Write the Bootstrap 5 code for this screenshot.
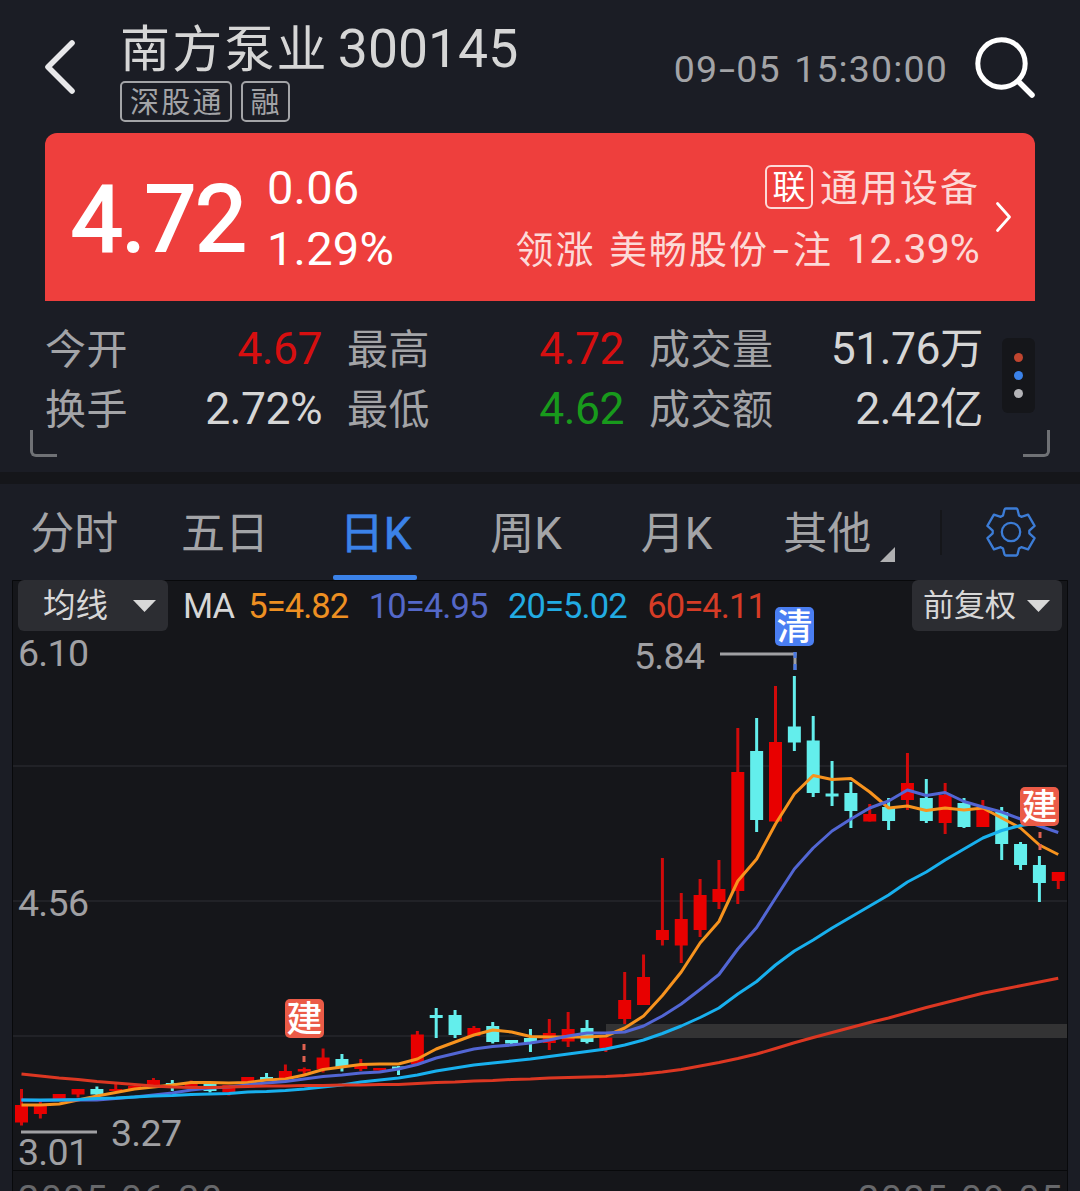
<!DOCTYPE html>
<html lang="zh-CN">
<head>
<meta charset="utf-8">
<meta name="viewport" content="width=device-width, initial-scale=1">
<title>南方泵业 300145</title>
<link rel="stylesheet" href="https://cdn.jsdelivr.net/npm/bootstrap@5.3.0/dist/css/bootstrap.min.css">
<style>
:root{--page:#1b1d25;--deep:#15161a;--muted:#a3a4a7;--bright:#d6d6d6;--accent:#3b82e9}
html,body{height:1191px;overflow:hidden}
body{background:var(--page);color:var(--bright);font-family:Roboto,"Noto Sans CJK SC",sans-serif;width:1080px;line-height:1;white-space:nowrap}
.topbar{height:133px;padding:0 45px}
.back{width:75px;padding-top:39px}
.stock{height:50px;margin-top:24px}
.stock-name{font-size:50px;letter-spacing:2.2px;line-height:50px;padding-top:2px}
.stock-code{font-size:53.5px;letter-spacing:0;line-height:50px;margin-left:9px}
.tags{gap:9px;margin-top:7px}
.tag{height:41px;border:2px solid var(--muted);border-radius:5px;color:var(--muted);font-size:29px;line-height:41px;letter-spacing:2.2px;padding:0 6px 0 8px}
.clock{font-size:37.5px;letter-spacing:1.15px;word-spacing:3px;color:var(--muted);padding-top:51px;margin-right:25px}
.dash{display:inline-block;text-align:center;letter-spacing:0;transform:scaleX(1.55)}
.clock .dash{width:18px}
.sector .dash{width:24px}
.find{padding-top:35px}
.quote{height:168px;margin:0 45px;background:#ee3f3d;border-radius:12px 12px 0 0;color:#fff}
.price{font-size:92px;-webkit-text-stroke:2px #fff;letter-spacing:-1.2px;width:222px;padding-left:26px;line-height:168px;padding-top:3px}
.delta{font-size:47px;line-height:60.5px;padding-top:25px;letter-spacing:.2px}
.sector{color:#fcdad8;font-size:38px;letter-spacing:2px;line-height:60px;padding-top:25px;margin-right:14px}
.sector-row{height:60.5px}
.lead-row{word-spacing:2px}
.link-tag{width:48px;height:44px;border:2px solid #fcdad8;border-radius:6px;font-size:33px;line-height:41px;color:#fff;letter-spacing:0;margin-right:7px;margin-top:-2px;text-align:center}
.pct{font-size:41px;letter-spacing:.1px}
.quote-arrow{padding-top:68px;margin-right:22px}
.stats{height:171px;padding:18px 45px 0}
.stat-col{line-height:60px}
.stat-col .d-flex{height:60px}
.stat-col .label{font-size:41px;letter-spacing:.5px;color:var(--muted);padding-top:1px}
.stat-col .val{font-size:44.5px;letter-spacing:-.5px}
.narrow{width:277px;margin-right:25px}
.wide{width:334px}
.unit{font-size:43.5px}
.up{color:#d60f10}.down{color:#189a1c}
.more{width:33px;height:75px;background:var(--deep);border-radius:6px;margin:19px 0 0 19px;gap:9px}
.dot{width:9px;height:9px;border-radius:50%}
.corner{bottom:15px;width:27px;height:27px;border:solid #6f7175;border-width:0 0 3px 3px;border-radius:0 0 0 6px}
.corner-l{left:30px}
.corner-r{right:30px;transform:scaleX(-1)}
.band{height:12px;background:var(--deep)}
.tabs{height:96px}
.tab-item{width:150.6px;height:96px;font-size:44px;line-height:100px;color:var(--muted)}
.tab-item:first-child{margin-left:-1px}
.tab-item.on{color:var(--accent);-webkit-text-stroke:.6px var(--accent)}
.tab-item.on::after{content:"";position:absolute;left:33px;right:33.6px;bottom:0;height:5px;border-radius:2px;background:var(--accent)}
.tab-mark{right:8px;top:63px}
.tab-sep{width:2px;height:45px;background:var(--deep);margin-left:37px}
.gear{margin-left:43px}
.chart-box{height:611px;margin:0 12px;background:var(--deep)}
.tools{left:6px;right:6px;top:0;height:51px}
.pick{width:150px;height:51px;background:#2c2d32;border-radius:6px;font-size:32.5px;line-height:52px;color:#d8d8d8}
.pick-ma{padding:0 12px 0 25px}
.pick-adj{padding:0 12px 0 11px;font-size:31px}
.ma{font-size:34.5px;line-height:52px;letter-spacing:-.9px;margin-left:20.5px}
svg{display:block}
svg text{font-family:Roboto,"Noto Sans CJK SC",sans-serif}
</style>
</head>
<body>
<header class="topbar d-flex align-items-start">
  <div class="back"><svg width="34" height="56" viewBox="0 0 34 56"><path d="M27 4 3 28 27 52" fill="none" stroke="#e8e8ea" stroke-width="5.6" stroke-linecap="round" stroke-linejoin="round"/></svg></div>
  <div class="flex-grow-1">
    <div class="stock d-flex align-items-center"><span class="stock-name">南方泵业</span><span class="stock-code">300145</span></div>
    <div class="tags d-flex"><span class="tag">深股通</span><span class="tag">融</span></div>
  </div>
  <div class="clock">09<span class="dash">-</span>05 15:30:00</div>
  <div class="find"><svg width="62" height="64" viewBox="0 0 62 64"><g fill="none" stroke="#fff"><circle cx="28.5" cy="28.5" r="23.7" stroke-width="5"/><path d="M46 47 59 60" stroke-width="5.500" stroke-linecap="round"/></g></svg></div>
</header>

<section class="quote d-flex">
  <div class="price">4.72</div>
  <div class="delta"><div>0.06</div><div>1.29%</div></div>
  <div class="sector ms-auto">
    <div class="sector-row d-flex justify-content-end align-items-center"><span class="link-tag">联</span><span>通用设备</span></div>
    <div class="sector-row lead-row text-end">领涨 美畅股份<span class="dash">-</span>注 <span class="pct">12.39%</span></div>
  </div>
  <div class="quote-arrow"><svg width="19" height="32" viewBox="0 0 19 32"><path d="M3.500 2.500 15.500 16 3.500 29.500" fill="none" stroke="#fff" stroke-width="2.800" stroke-linecap="round" stroke-linejoin="round"/></svg></div>
</section>

<section class="stats d-flex position-relative">
  <div class="stat-col narrow">
    <div class="d-flex justify-content-between"><span class="label">今开</span><span class="val up">4.67</span></div>
    <div class="d-flex justify-content-between"><span class="label">换手</span><span class="val">2.72%</span></div>
  </div>
  <div class="stat-col narrow">
    <div class="d-flex justify-content-between"><span class="label">最高</span><span class="val up">4.72</span></div>
    <div class="d-flex justify-content-between"><span class="label">最低</span><span class="val down">4.62</span></div>
  </div>
  <div class="stat-col wide">
    <div class="d-flex justify-content-between"><span class="label">成交量</span><span class="val">51.76<span class="unit">万</span></span></div>
    <div class="d-flex justify-content-between"><span class="label">成交额</span><span class="val">2.42<span class="unit">亿</span></span></div>
  </div>
  <div class="more d-flex flex-column align-items-center justify-content-center"><i class="dot" style="background:#c0452f"></i><i class="dot" style="background:#3b82e9"></i><i class="dot" style="background:#b4b4b8"></i></div>
  <span class="corner corner-l position-absolute"></span>
  <span class="corner corner-r position-absolute"></span>
</section>
<div class="band"></div>

<nav class="tabs d-flex align-items-center">
  <div class="tab-item text-center">分时</div>
  <div class="tab-item text-center">五日</div>
  <div class="tab-item text-center position-relative on">日K</div>
  <div class="tab-item text-center">周K</div>
  <div class="tab-item text-center">月K</div>
  <div class="tab-item text-center position-relative">其他<svg class="tab-mark position-absolute" width="15" height="15"><path d="M15 0V15H0Z" fill="#b0b0b2"/></svg></div>
  <div class="tab-sep"></div>
  <svg class="gear" width="52" height="52" viewBox="-26 -26 52 52"><g fill="none" stroke="#3c7cd6" stroke-width="2.300" stroke-linejoin="round"><path d="M-8-16.500-6.500-22.500Q-6.200-23.500-5.200-23.500H5.200Q6.200-23.500 6.500-22.500L8-16.500 10.300-15.200 17.100-17.400 23.600-6.100 18.300-1.300V1.300L23.600 6.100 17.100 17.400 10.300 15.200 8 16.500 6.500 22.500Q6.200 23.500 5.200 23.500H-5.200Q-6.200 23.500-6.500 22.500L-8 16.500-10.300 15.200-17.100 17.400-23.600 6.100-18.300 1.300V-1.300L-23.600-6.100-17.100-17.400-10.300-15.200Z"/><circle r="9.200"/></g></svg>
</nav>

<main class="chart-box position-relative">
  <svg id="chart" width="1056" height="611" viewBox="12 580 1056 611"></svg>
  <div class="tools position-absolute d-flex">
    <div class="pick pick-ma d-flex align-items-center justify-content-between">均线<svg width="23" height="12"><path d="M0 0H23L11.500 12Z" fill="#d8d8d8"/></svg></div>
    <div class="ma" style="margin-left:15px">MA</div>
    <div class="ma" style="margin-left:14px;color:#ee9022">5=4.82</div>
    <div class="ma" style="color:#5468c8">10=4.95</div>
    <div class="ma" style="color:#22abe2">20=5.02</div>
    <div class="ma" style="color:#d63c26">60=4.11</div>
    <div class="pick pick-adj d-flex align-items-center justify-content-between ms-auto">前复权<svg width="23" height="12"><path d="M0 0H23L11.500 12Z" fill="#d8d8d8"/></svg></div>
  </div>
</main>

<script src="https://cdn.jsdelivr.net/npm/bootstrap@5.3.0/dist/js/bootstrap.bundle.min.js"></script>
<script>
// One row per day: direction, wick top, body top, body bottom, wick bottom
const days = [
['r',1089,1105,1122.5,1125.5],['r',1101,1104,1114,1118.5],['r',1094,1094,1099,1099],['r',1089,1089,1094.5,1097.5],
['c',1086.5,1089,1094.5,1095],['r',1082,1089,1091,1091],['r',1086,1086,1089,1089],['r',1078,1080,1085,1088],
['c',1080,1083,1085,1091],['r',1080.5,1083,1086,1087],['c',1083,1084,1091,1092.5],['r',1085,1085,1092.5,1095.5],
['r',1077,1077,1082,1088],['c',1073,1077,1080,1081],['r',1064.5,1071,1078,1078],['r',1067.5,1069,1071.5,1074],
['r',1048.5,1057.5,1069,1072.5],['c',1054,1059,1067,1071.5],['r',1059,1065.5,1069,1071],['r',1068,1068,1070.5,1070.5],
['c',1066,1066.5,1069,1075],['r',1031,1034.5,1064,1064],['c',1008,1015,1018,1038],['c',1010,1015,1035,1038],
['r',1026,1028,1036,1036],['c',1022,1026,1042,1043.5],['c',1040,1040,1043.5,1046],['c',1029,1038,1042.5,1052],
['r',1019,1033,1043,1050],['r',1012,1029,1041.5,1047],['c',1020,1028,1042,1043.5],['r',1037.5,1037.5,1048,1052],
['r',972,1000,1019,1024],['r',954.5,977,1005,1005],['r',858,930,940,945.5],['r',893,919,945.5,963],
['r',879,895,930,937],['r',860,889,902,909],['r',728,772,891,904],['c',718,751,820,832],
['r',686,742,821.5,821.5],['c',676,726.5,742.5,751],['c',716,740.5,793,797],['c',761,793.5,796.5,806],
['c',782,793,811,828],['r',804,814,821.5,821.5],['c',798,807,821,830],['r',753,783,800,810],
['c',779,798,821,823],['r',783,795,823,834],['c',798,803,827,828],['r',800,807,827,827],
['c',807,812,844,860],['c',842,844,865,870],['c',856,865,883,902],['r',872,872,881,889]];
const ma5=[1105,1105,1104,1100,1096,1092.5,1089,1087,1085,1082.5,1082.5,1083,1082.5,1080,1079,1075,1069.5,1067,1064.5,1064,1064,1059,1049,1042,1035,1030,1032,1036.5,1037,1037,1037,1036,1028,1016,995.5,972,943,921.5,881,859,824,794,775.5,779.5,778.5,792,808,806,810.5,808,810,808,818,828,845,854.5];
const ma10=[1100,1100.5,1100,1100,1100,1098.5,1097,1095,1093,1090,1088,1087,1085,1083,1081.5,1079,1076.5,1075,1073,1072,1069,1064.5,1058,1053.5,1049,1046.5,1045,1043,1040,1036,1033,1033,1032,1026,1016,1004,989.5,974.5,949,927.5,898,869,848,831,819,808,801,790,795.5,792.5,801.5,807,812,819,826,832.5];
const ma20=[1100,1100,1100,1099.5,1098.5,1098,1097,1096,1095.5,1094.5,1094,1093.5,1092,1091.5,1090.5,1089,1087,1085,1082,1080,1078,1075,1071,1068,1065,1063,1061,1059,1056.5,1054,1051.5,1049,1045,1040,1033.5,1026,1017.5,1008,994,981.5,965,951,940,928,917,906,895,882,872,860,849,838,830.5,825.5,823];
const ma60=[1074,1076,1078,1079.5,1081.5,1083,1084.5,1086,1087,1087.5,1087.5,1087,1086.5,1086,1086,1085.5,1085.5,1085,1085,1084.5,1084.5,1083.5,1082.5,1082,1081,1080.5,1079.5,1079,1078,1077.5,1077,1076.5,1075.5,1074,1072,1069.5,1066,1062.5,1058.5,1054,1048.5,1042.7,1037.5,1032.5,1027.5,1022.5,1018,1012.7,1007.5,1002.7,998,993.3,989.5,985.7,982,978.3];
const x = i => 21.5 + 18.85*i;
let s = '';
for (const y of [766,901,1036]) s += `<path d="M12 ${y}H1068" stroke="#212227" stroke-width="2"/>`;
s += '<rect x="606" y="1024" width="462" height="14" fill="#333334"/>';
days.forEach((d,i)=>{
  const [k,h,t,b,l]=d, X=x(i), f=k==='r'?'#e80000':'#63eeec', w=k==='r'?'#d00a0a':'#63eeec';
  s += `<path d="M${X} ${h}V${l}" stroke="${w}" stroke-width="3"/><rect x="${X-6.5}" y="${t}" width="13" height="${b-t}" fill="${f}"/>`;
});
const line=(a,c)=>`<polyline fill="none" stroke="${c}" stroke-width="3" stroke-linejoin="round" points="${a.map((y,i)=>x(i)+','+y).join(' ')}"/>`;
s += line(ma5,'#f7931e')+line(ma10,'#5266d4')+line(ma20,'#18b0ee')+line(ma60,'#dc3722');
const label=(t,X,y,w,c='#a0a0a3')=>`<text x="${X}" y="${y}" font-size="37.500" fill="${c}" textLength="${w}">${t}</text>`;
s += label('6.10',18,665.5,71)+label('4.56',18,915.5,71)+label('3.01',18,1165,71)+label('3.27',111,1146,71)+label('5.84',634,668.5,71);
s += '<path d="M12.500 1191V580.500H1067.500V1191M12 1170.500H1068" fill="none" stroke="#08090b"/>';
s += label('2025-06-30',18,1211,204,'#67686b')+label('2025-09-05',858,1211,204,'#67686b');
s += '<path d="M21 1132H97M720 654H796.500" stroke="#a0a0a3" stroke-width="3"/>';
s += '<path d="M795 652V670" stroke="#a0a0a3" stroke-width="3"/><path d="M795 652v6m0 6v6" stroke="#4a79e4" stroke-width="3"/>';
s += '<path d="M304 1044v6m0 6v6M1040 832v6m0 6v6" stroke="#e06150" stroke-width="3"/>';
const badge=(t,X,y,c)=>`<rect x="${X}" y="${y}" width="39" height="39" rx="5" fill="${c}"/><text x="${X+19.5}" y="${y+33}" font-size="36" font-weight="500" fill="#fff" text-anchor="middle">${t}</text>`;
s += badge('清',775,607,'#4a7ef2')+badge('建',285,999,'#eb5b47')+badge('建',1020,787,'#eb5b47');
document.getElementById('chart').innerHTML = s;
</script>
</body>
</html>
